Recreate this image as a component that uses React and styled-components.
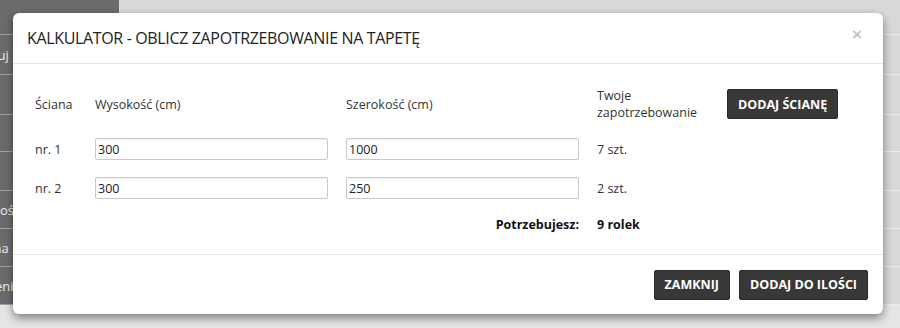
import React, { useState } from "react";
import styled, { createGlobalStyle } from "styled-components";

const GlobalStyle = createGlobalStyle`
  html, body {
    margin: 0;
    padding: 0;
    background: #e6e6e6;
    font-family: "Open Sans", "DejaVu Sans", sans-serif;
  }
  * { box-sizing: border-box; }
`;

/* ---------------- BACKGROUND PAGE ---------------- */

const Page = styled.div`
  position: relative;
  width: 900px;
  height: 328px;
  overflow: hidden;
  display: flex;
  align-items: flex-start;
  background: #e6e6e6;
`;

const Sidebar = styled.div`
  width: 119px;
  display: flex;
  flex-direction: column;
  background: #6b6b6b;
`;

const SideItem = styled.div`
  height: ${p => p.h || 38}px;
  border-bottom: 1px solid #a2a2a2;
  display: flex;
  align-items: center;
  color: #f2f2f2;
  font-size: 13px;
  white-space: nowrap;
  text-indent: ${p => p.shift || 0}px;
  overflow: hidden;
`;

const Content = styled.div`
  flex: 1;
  display: flex;
  flex-direction: column;
  background: #d9d9d9;
`;

const ContentRow = styled.div`
  height: ${p => p.h || 38}px;
  border-bottom: 1px solid #ececec;
`;

/* ---------------- MODAL ---------------- */

const Modal = styled.div`
  position: absolute;
  left: 13px;
  top: 13px;
  width: 870px;
  height: 301px;
  background: #fff;
  border-radius: 6px;
  box-shadow: 0 4px 10px rgba(0, 0, 0, 0.45);
  display: flex;
  flex-direction: column;
  color: #333;
`;

const Header = styled.div`
  height: 51px;
  flex-shrink: 0;
  border-bottom: 1px solid #e5e5e5;
  display: flex;
  align-items: center;
  justify-content: space-between;
  padding: 0 18px 0 14px;
`;

const Title = styled.h4`
  margin: 0;
  font-size: 16px;
  font-weight: 400;
  color: #222;
  letter-spacing: -0.35px;
`;

const CloseBtn = styled.button`
  border: none;
  background: none;
  padding: 0;
  color: #c4c4c4;
  font-size: 17px;
  font-weight: 700;
  line-height: 1;
  cursor: pointer;
  margin-top: -8px;
  margin-right: 3px;
`;

const Body = styled.div`
  flex: 1;
  padding: 23px 22px 0;
  border-bottom: 1px solid #e5e5e5;
`;

const Grid = styled.div`
  display: grid;
  grid-template-columns: 42px 233px 233px 112px 112px;
  column-gap: 18px;
  row-gap: 17px;
  align-items: center;
  font-size: 12.5px;
`;

const Cell = styled.div`
  text-align: ${p => (p.right ? "right" : "left")};
  font-weight: ${p => (p.bold ? 700 : 400)};
  color: ${p => (p.bold ? "#111" : "#333")};
  line-height: 17px;
  grid-column: ${p => p.span || "auto"};
  white-space: nowrap;
`;

const Input = styled.input`
  width: 100%;
  height: 22px;
  border: 1px solid #c9c9c9;
  border-radius: 2px;
  padding: 0 2px;
  font-family: inherit;
  font-size: 12.5px;
  color: #222;
  box-shadow: inset 0 1px 1px rgba(0, 0, 0, 0.06);
  outline: none;
`;

const DarkBtn = styled.button`
  height: 30px;
  padding: 0 ${p => p.px || 10}px;
  background: #383838;
  color: #fff;
  border: 1px solid #2a2a2a;
  border-radius: 2px;
  font-family: inherit;
  font-size: 12.5px;
  font-weight: 700;
  white-space: nowrap;
  cursor: pointer;
`;

const Footer = styled.div`
  height: 59px;
  flex-shrink: 0;
  display: flex;
  align-items: center;
  justify-content: flex-end;
  gap: 9px;
  padding-right: 15px;
`;

const sideItems = [
  { h: 35, text: "", shift: 0 },
  { h: 40, text: "Aktualizuj", shift: -50 },
  { h: 40, text: "", shift: 0 },
  { h: 37, text: "", shift: 0 },
  { h: 39, text: "", shift: 0 },
  { h: 38, text: "Ilości", shift: -7 },
  { h: 38, text: "Cena", shift: -22 },
  { h: 38, text: "Ustawienia", shift: -46 },
];

const contentRows = [35, 40, 40, 37, 39, 38, 38, 38];

export default function App() {
  const [walls, setWalls] = useState([
    { h: "300", w: "1000", need: 7 },
    { h: "300", w: "250", need: 2 },
  ]);

  const update = (i, key, value) => {
    setWalls(ws => ws.map((w, idx) => (idx === i ? { ...w, [key]: value } : w)));
  };

  const total = walls.reduce((s, w) => s + w.need, 0);

  return (
    <>
      <GlobalStyle />
      <Page>
        <Sidebar>
          {sideItems.map((it, i) => (
            <SideItem key={i} h={it.h} shift={it.shift}>
              {it.text}
            </SideItem>
          ))}
        </Sidebar>
        <Content>
          {contentRows.map((h, i) => (
            <ContentRow key={i} h={h} />
          ))}
        </Content>

        <Modal>
          <Header>
            <Title>KALKULATOR - OBLICZ ZAPOTRZEBOWANIE NA TAPETĘ</Title>
            <CloseBtn aria-label="Zamknij">×</CloseBtn>
          </Header>

          <Body>
            <Grid>
              <Cell>Ściana</Cell>
              <Cell>Wysokość (cm)</Cell>
              <Cell>Szerokość (cm)</Cell>
              <Cell>
                Twoje
                <br />
                zapotrzebowanie
              </Cell>
              <div>
                <DarkBtn px={10}>DODAJ ŚCIANĘ</DarkBtn>
              </div>

              {walls.map((w, i) => (
                <React.Fragment key={i}>
                  <Cell>nr. {i + 1}</Cell>
                  <Input value={w.h} onChange={e => update(i, "h", e.target.value)} />
                  <Input value={w.w} onChange={e => update(i, "w", e.target.value)} />
                  <Cell span="4 / 6">{w.need} szt.</Cell>
                </React.Fragment>
              ))}

              <Cell bold right span="1 / 4">Potrzebujesz:</Cell>
              <Cell bold span="4 / 6">{total} rolek</Cell>
            </Grid>
          </Body>

          <Footer>
            <DarkBtn>ZAMKNIJ</DarkBtn>
            <DarkBtn>DODAJ DO ILOŚCI</DarkBtn>
          </Footer>
        </Modal>
      </Page>
    </>
  );
}
